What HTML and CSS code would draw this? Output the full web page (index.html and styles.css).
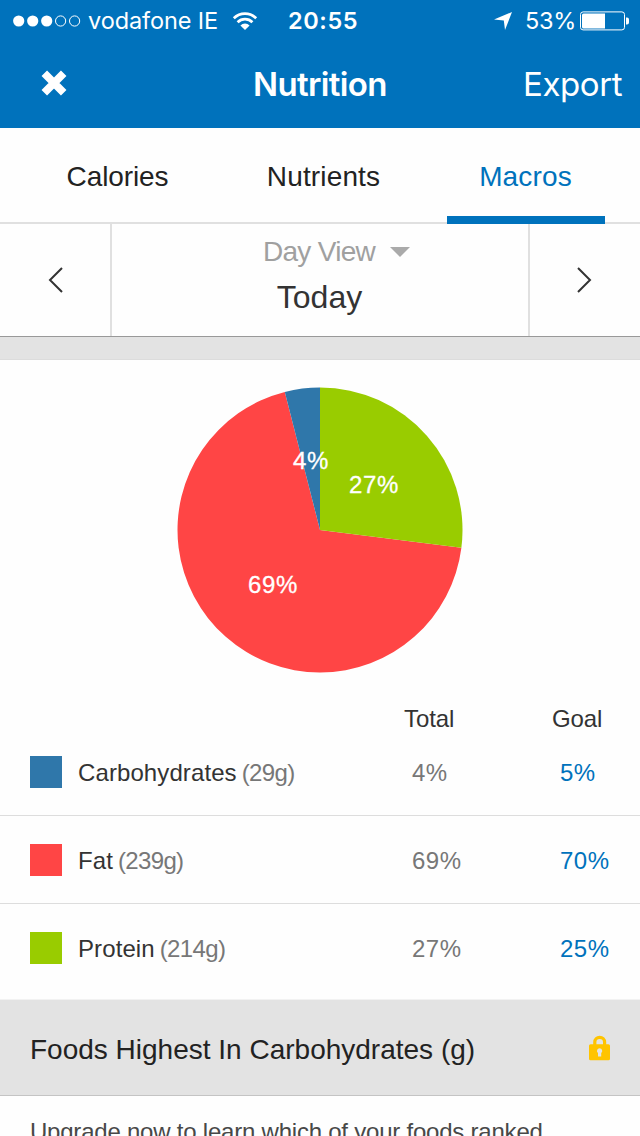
FILE: index.html
```html
<!DOCTYPE html>
<html lang="en">
<head>
<meta charset="utf-8">
<title>Nutrition</title>
<link rel="stylesheet" href="styles.css">
</head>
<body>
<header class="top">
  <div class="status">
    <svg class="signal" width="68" height="12" viewBox="0 0 68 12"><g fill="#fff"><circle cx="5.7" cy="6" r="5.6"/><circle cx="19.7" cy="6" r="5.6"/><circle cx="33.7" cy="6" r="5.6"/></g><g fill="none" stroke="#fff"><circle cx="47.6" cy="6" r="5.1"/><circle cx="61.6" cy="6" r="5.1"/></g></svg>
    <span class="carrier">vodafone IE</span>
    <svg class="wifi" width="26" height="20" viewBox="0 0 26 20"><g fill="none" stroke="#fff" stroke-width="2.7"><path d="M1.8 7.3A15.9 15.9 0 0 1 24.2 7.3"/><path d="M5.6 11.3A10.4 10.4 0 0 1 20.4 11.3"/></g><path fill="#fff" d="M13 19L8.4 14.5a6.5 6.5 0 0 1 9.2 0z"/></svg>
    <span class="clock">20:55</span>
    <svg class="location" width="18" height="18" viewBox="0 0 18 18"><path fill="#fff" d="M18 0L11 18L9.8 8.4L0 7.6Z"/></svg>
    <span class="charge">53%</span>
    <svg class="battery" width="50" height="20" viewBox="0 0 50 20"><rect x=".5" y=".9" width="44" height="18" rx="2.6" fill="none" stroke="#fff"/><path fill="#fff" d="M3.5 2.5H25V17.5H3.5a1.5 1.5 0 0 1-1.5-1.5V4a1.5 1.5 0 0 1 1.5-1.5zM46 6.5h1q2 0 2 2v3q0 2-2 2h-1z"/></svg>
  </div>
  <div class="nav">
    <svg class="close" width="26" height="26" viewBox="0 0 26 26"><path d="M3.3 3.3L22.7 22.7M22.7 3.3L3.3 22.7" stroke="#fff" stroke-width="7.8"/></svg>
    <h1 class="title">Nutrition</h1>
    <span class="export">Export</span>
  </div>
</header>
<nav class="tabs">
  <span class="tab first">Calories</span>
  <span class="tab">Nutrients</span>
  <span class="tab active">Macros</span>
</nav>
<section class="day">
  <div class="arrow prev"><svg width="16" height="26" viewBox="0 0 16 26"><path d="M14 1L2 13L14 25" fill="none" stroke="#333" stroke-width="2"/></svg></div>
  <div class="current">
    <div class="view"><span>Day View</span><svg width="20" height="10" viewBox="0 0 20 10"><path d="M0 0H20L10 10Z" fill="#aaa"/></svg></div>
    <div class="date">Today</div>
  </div>
  <div class="arrow next"><svg width="16" height="26" viewBox="0 0 16 26"><path d="M2 1L14 13L2 25" fill="none" stroke="#333" stroke-width="2"/></svg></div>
</section>
<div class="band"></div>
<section class="macros">
  <svg class="pie" width="286" height="286" viewBox="-143 -143 286 286">
    <path d="M0 0L141.4 17.7A142.5 142.5 0 1 1 -35.2 -138.1Z" fill="#ff4545"/>
    <path d="M0 0V-142.5A142.5 142.5 0 0 1 141.4 17.7Z" fill="#99cc00"/>
    <path d="M0 0L-35.2 -138.1A142.5 142.5 0 0 1 0 -142.5Z" fill="#2f77aa"/>
    <text class="share" x="29" y="-37.5">27%</text>
    <text class="share" x="-72" y="63">69%</text>
    <text class="share" x="-27" y="-61">4%</text>
  </svg>
  <div class="heads"><span class="head-total">Total</span><span>Goal</span></div>
  <div class="row"><i class="swatch carbs"></i><div class="name">Carbohydrates<span class="grams">(29g)</span></div><span class="total">4%</span><span class="goal">5%</span></div>
  <div class="row"><i class="swatch fat"></i><div class="name">Fat<span class="grams">(239g)</span></div><span class="total">69%</span><span class="goal">70%</span></div>
  <div class="row last"><i class="swatch protein"></i><div class="name">Protein<span class="grams">(214g)</span></div><span class="total">27%</span><span class="goal">25%</span></div>
</section>
<section class="foods">
  <h2 class="foods-title">Foods Highest In Carbohydrates (g)</h2>
  <svg width="22" height="26" viewBox="0 0 22 26"><path d="M5.8 11V7.2a4.9 4.9 0 0 1 9.8 0V11" fill="none" stroke="#ffc400" stroke-width="3.2"/><path fill="#ffc400" fill-rule="evenodd" d="M1.5 9.3h18q1.5 0 1.5 1.5v13q0 1.5-1.5 1.5h-18q-1.5 0-1.5-1.5v-13q0-1.5 1.5-1.5zM10.6 13.2a2.7 2.7 0 0 0-1.6 4.8v3.5h3.2V18a2.7 2.7 0 0 0-1.6-4.8z"/></svg>
</section>
<p class="upgrade">Upgrade now to learn which of your foods ranked</p>
</body>
</html>
```
FILE: styles.css
```css
* { box-sizing: border-box; }
body {
  margin: 0;
  width: 640px;
  height: 1136px;
  overflow: hidden;
  background: #fefefe;
  color: #333;
  font-family: "Liberation Sans", Arial, sans-serif;
  white-space: nowrap;
}
svg { display: block; flex: none; }

.top { height: 128px; background: #0072bc; color: #fff; font-family: Inter, sans-serif; }
.status { display: flex; align-items: center; height: 41px; padding-left: 13px; font-size: 23.5px; line-height: 42px; }
.carrier { width: 144px; padding-left: 7px; letter-spacing: -.1px; }
.wifi { margin-left: 7px; }
.clock { width: 206px; padding-left: 30px; font-weight: 600; letter-spacing: .6px; }
.location { margin-left: 30px; }
.charge { width: 67px; padding-left: 13px; letter-spacing: -.3px; }
.status .battery { margin-left: 1px; }
.nav { display: grid; grid-template-columns: 42px 211px 271px 1fr; height: 87px; line-height: 87px; font-size: 33px; }
.close { grid-column: 1; margin: 29px 0 0 41px; }
.title { grid-column: 3; margin: 0; font-size: 33px; font-weight: 600; letter-spacing: -.65px; }
.export { grid-column: 4; margin-left: -1px; letter-spacing: -.4px; }

.tabs { display: grid; grid-template-columns: 158px; grid-auto-columns: 158px; grid-auto-flow: column; column-gap: 48px; height: 96px; padding-left: 35px; border-bottom: 2px solid #e0e0e0; font-size: 28px; line-height: 97px; color: #222; text-align: center; }
.tab { height: 96px; letter-spacing: .15px; padding-left: 7px; }
.first { letter-spacing: -.1px; }
.active { padding: 0 1px 0 0; letter-spacing: .15px; border-bottom: 8px solid #0072bc; color: #0072bc; }

.day { display: grid; grid-template-columns: 112px 1fr 112px; height: 113px; border-bottom: 1px solid #999; }
.arrow { display: flex; align-items: center; justify-content: center; }
.prev { border-right: 2px solid #e0e0e0; padding-left: 2px; }
.next { border-left: 2px solid #e0e0e0; padding-right: 2px; }
.view { display: flex; align-items: center; justify-content: center; gap: 15px; padding: 1px 0 0 33px; height: 55px; color: #a0a0a0; font-size: 28px; letter-spacing: -.7px; }
.date { font-size: 32px; line-height: 36px; text-align: center; padding-right: 1px; }
.band { height: 23px; background: #e3e3e3; border-bottom: 1px solid #dcdcdc; }

.macros { height: 640px; padding-top: 27px; font-size: 24px; box-shadow: inset 0 -1px 0 #f2f2f2; }
.pie { margin: 0 auto; }
.share { font-size: 24px; letter-spacing: .6px; fill: #fff; stroke: #fff; stroke-width: .3px; }
.heads { display: grid; grid-template-columns: 148px 1fr; height: 55px; padding-left: 404px; line-height: 91px; letter-spacing: -.1px; }
.row { display: grid; grid-template-columns: 48px 334px 148px 1fr; align-items: center; height: 88px; padding: 1px 0 0 30px; border-bottom: 1px solid #ddd; }
.row.last { border-color: transparent; }
.row > .name, .row > .total, .row > .goal { padding-top: 2px; }
.swatch { width: 32px; height: 32px; }
.carbs { background: #2f77aa; }
.fat { background: #ff4545; }
.protein { background: #99cc00; }
.name { letter-spacing: .1px; }
.grams { margin-left: 5px; color: #777; letter-spacing: -.65px; }
.total { color: #777; letter-spacing: .5px; }
.goal { color: #0072bc; letter-spacing: .5px; }

.foods { display: flex; align-items: center; justify-content: space-between; height: 96px; padding: 0 29px 0 30px; background: #e3e3e3; border-bottom: 1px solid #c4c4c4; color: #222; }
.foods-title { margin: 0; font-size: 28px; font-weight: 400; padding-top: 4px; }
.upgrade { margin: 0 0 0 30px; font-size: 24px; line-height: 72px; letter-spacing: -.22px; color: #484848; }
```
